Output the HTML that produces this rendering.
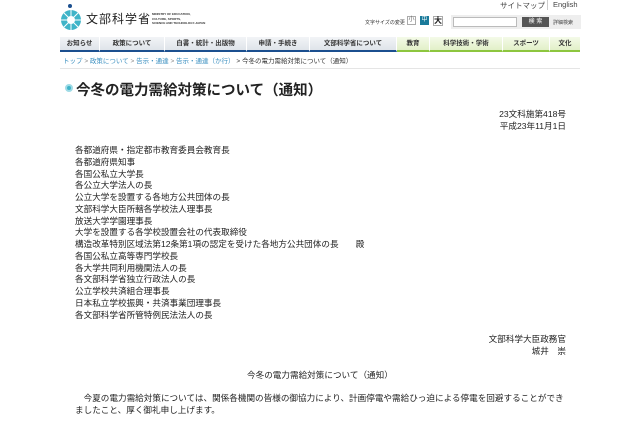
<!DOCTYPE html>
<html><head><meta charset="utf-8"><style>
*{margin:0;padding:0;box-sizing:border-box}
body{width:640px;height:426px;overflow:hidden;background:#fff;font-family:"Liberation Sans","Noto Sans CJK JP",sans-serif;color:#222;position:relative}
.a{position:absolute;white-space:nowrap}
.nav{position:absolute;top:37px;left:60px;width:520px;height:15px;display:flex;font-size:6.5px;font-weight:bold;color:#333}
.nav div{height:15px;line-height:13px;text-align:center;border-right:1px solid #fff}
.b{background:linear-gradient(#f2f4f7,#dfe4ea);border-bottom:2px solid #1b4f8f}
.g{background:linear-gradient(#f4fae8,#e2f0c8);border-bottom:2px solid #8dc63f}
.t{font-size:8.6px;line-height:11.75px;color:#222}
</style></head><body>
<svg class="a" style="left:60px;top:3px" width="24" height="28" viewBox="0 0 24 28">
<circle cx="10" cy="3" r="2" fill="#1b4f8f"/>
<circle cx="11" cy="17" r="10" fill="#3fb4c8"/>
<circle cx="11" cy="17" r="4" fill="#fff"/>
<g stroke="#fff" stroke-width="1"><line x1="11" y1="7" x2="11" y2="27"/><line x1="1" y1="17" x2="21" y2="17"/><line x1="4" y1="10" x2="18" y2="24"/><line x1="18" y1="10" x2="4" y2="24"/></g>
</svg>
<div class="a" style="left:86px;top:10px;font-size:12px;letter-spacing:1px;color:#222">文部科学省</div>
<div class="a" style="left:152px;top:12px;font-size:3px;line-height:4.5px;font-weight:bold;color:#333">MINISTRY OF EDUCATION,<br>CULTURE, SPORTS,<br>SCIENCE AND TECHNOLOGY-JAPAN</div>
<div class="a" style="left:500px;top:0px;font-size:7.5px;color:#444">サイトマップ</div>
<div class="a" style="left:547px;top:0;height:10px;border-left:1px solid #ccc"></div>
<div class="a" style="left:553px;top:0px;font-size:7.5px;color:#444">English</div>
<div class="a" style="left:365px;top:19px;font-size:5px;color:#333">文字サイズの変更</div>
<div class="a" style="left:407px;top:16px;width:9px;height:9px;border:1px solid #aaa;font-size:6px;text-align:center;line-height:7px;color:#666">小</div>
<div class="a" style="left:420px;top:16px;width:9px;height:9px;background:#1a7a9a;font-size:6px;text-align:center;line-height:9px;color:#fff">中</div>
<div class="a" style="left:433px;top:16px;width:10px;height:10px;border:1px solid #aaa;font-size:8px;font-weight:bold;text-align:center;line-height:8px">大</div>
<div class="a" style="left:451px;top:15px;width:130px;height:14px;background:#eee"></div>
<div class="a" style="left:453px;top:17px;width:64px;height:10px;background:#fff;border:1px solid #bbb"></div>
<div class="a" style="left:522px;top:17px;width:27px;height:10px;background:#555;color:#fff;font-size:6px;text-align:center;line-height:10px">検 索</div>
<div class="a" style="left:553px;top:19px;font-size:5px;color:#444">詳細検索</div>
<div class="nav">
<div class="b" style="width:40px">お知らせ</div>
<div class="b" style="width:65px">政策について</div>
<div class="b" style="width:82px">白書・統計・出版物</div>
<div class="b" style="width:63px">申請・手続き</div>
<div class="b" style="width:87px">文部科学省について</div>
<div class="g" style="width:33px">教育</div>
<div class="g" style="width:73px">科学技術・学術</div>
<div class="g" style="width:47px">スポーツ</div>
<div class="g" style="width:30px;border-right:0">文化</div>
</div>
<div class="a" style="left:63px;top:55px;font-size:6.5px;color:#3a8fc0">トップ <span style="color:#888">&gt;</span> 政策について <span style="color:#888">&gt;</span> 告示・通達 <span style="color:#888">&gt;</span> 告示・通達（か行） <span style="color:#333">&gt; 今冬の電力需給対策について（通知）</span></div>
<div class="a" style="left:60px;top:68px;width:520px;border-top:1px solid #e5e5e5"></div>
<div class="a" style="left:65px;top:84px;width:8px;height:8px;border-radius:50%;background:#3fb4c8;border:2px solid #9fdbe6"></div>
<div class="a" style="left:76px;top:79px;font-size:14.5px;font-weight:bold;color:#222">今冬の電力需給対策について（通知）</div>
<div class="a t" style="right:74px;top:109px;text-align:right">23文科施第418号<br>平成23年11月1日</div>
<div class="a t" style="left:75px;top:145px">各都道府県・指定都市教育委員会教育長<br>各都道府県知事<br>各国公私立大学長<br>各公立大学法人の長<br>公立大学を設置する各地方公共団体の長<br>文部科学大臣所轄各学校法人理事長<br>放送大学学園理事長<br>大学を設置する各学校設置会社の代表取締役<br>構造改革特別区域法第12条第1項の認定を受けた各地方公共団体の長　　殿<br>各国公私立高等専門学校長<br>各大学共同利用機関法人の長<br>各文部科学省独立行政法人の長<br>公立学校共済組合理事長<br>日本私立学校振興・共済事業団理事長<br>各文部科学省所管特例民法法人の長</div>
<div class="a t" style="right:74px;top:334px;text-align:right">文部科学大臣政務官<br>城井　崇　</div>
<div class="a t" style="left:247px;top:370px">今冬の電力需給対策について（通知）</div>
<div class="a t" style="left:75px;top:393px">　今夏の電力需給対策については、関係各機関の皆様の御協力により、計画停電や需給ひっ迫による停電を回避することができ<br>ましたこと、厚く御礼申し上げます。</div>
</body></html>
